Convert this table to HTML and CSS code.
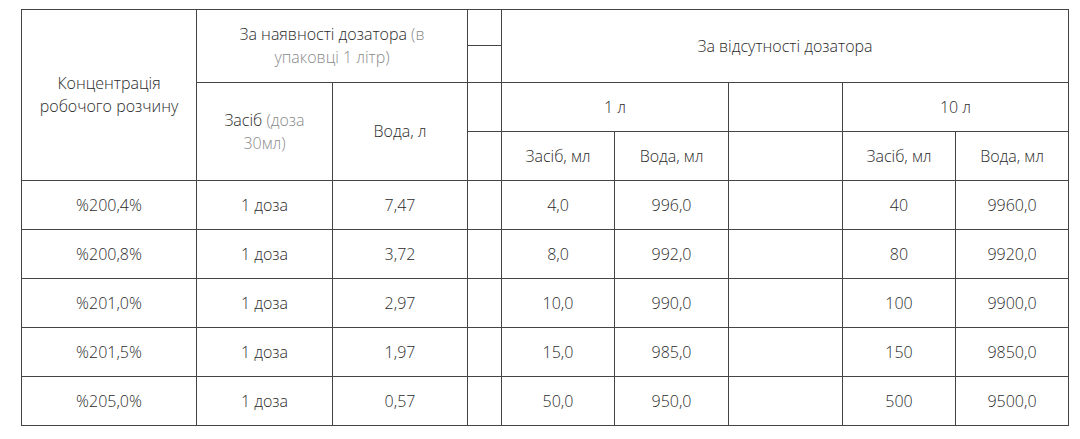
FILE: index.html
```html
<!DOCTYPE html>
<html lang="uk">
<head>
<meta charset="utf-8">
<title>Таблиця розведення</title>
<link rel="stylesheet" href="styles.css">
</head>
<body>
<table class="dose-table">
  <colgroup>
    <col class="c-conc">
    <col class="c-dose">
    <col class="c-water">
    <col class="c-gap">
    <col class="c-sub">
    <col class="c-sub2">
    <col class="c-sub2">
    <col class="c-sub">
    <col class="c-sub">
  </colgroup>
  <thead>
    <tr class="h-top-a">
      <th rowspan="4">Концентрація<br>робочого розчину</th>
      <th colspan="2" rowspan="2">За наявності дозатора <span class="muted">(в<br>упаковці 1 літр)</span></th>
      <th></th>
      <th colspan="5" rowspan="2">За відсутності дозатора</th>
    </tr>
    <tr class="h-top-b">
      <th></th>
    </tr>
    <tr class="h-mid">
      <th rowspan="2">Засіб <span class="muted">(доза<br>30мл)</span></th>
      <th rowspan="2">Вода, л</th>
      <th></th>
      <th colspan="2">1 л</th>
      <th></th>
      <th colspan="2">10 л</th>
    </tr>
    <tr class="h-low">
      <th></th>
      <th>Засіб, мл</th>
      <th>Вода, мл</th>
      <th></th>
      <th>Засіб, мл</th>
      <th>Вода, мл</th>
    </tr>
  </thead>
  <tbody>
    <tr><td>%200,4%</td><td>1 доза</td><td>7,47</td><td></td><td>4,0</td><td>996,0</td><td></td><td>40</td><td>9960,0</td></tr>
    <tr><td>%200,8%</td><td>1 доза</td><td>3,72</td><td></td><td>8,0</td><td>992,0</td><td></td><td>80</td><td>9920,0</td></tr>
    <tr><td>%201,0%</td><td>1 доза</td><td>2,97</td><td></td><td>10,0</td><td>990,0</td><td></td><td>100</td><td>9900,0</td></tr>
    <tr><td>%201,5%</td><td>1 доза</td><td>1,97</td><td></td><td>15,0</td><td>985,0</td><td></td><td>150</td><td>9850,0</td></tr>
    <tr><td>%205,0%</td><td>1 доза</td><td>0,57</td><td></td><td>50,0</td><td>950,0</td><td></td><td>500</td><td>9500,0</td></tr>
  </tbody>
</table>
</body>
</html>
```

FILE: styles.css
```css
html, body {
  margin: 0;
  padding: 0;
  background: #ffffff;
}

body {
  padding: 9px 0 0 21px;
  font-family: "Open Sans", "DejaVu Sans", sans-serif;
  color: #2b2b2b;
}

.dose-table {
  border-collapse: collapse;
  table-layout: fixed;
  width: 1048px;
}

.c-conc { width: 175px; }
.c-dose { width: 136px; }
.c-water { width: 135px; }
.c-gap { width: 34px; }
.c-sub { width: 113px; }
.c-sub2 { width: 114px; }

.dose-table th,
.dose-table td {
  border: 1px solid #444444;
  padding: 0 4px;
  text-align: center;
  vertical-align: middle;
  font-weight: 300;
  font-size: 16px;
  line-height: 23px;
  color: #2b2b2b;
}

.dose-table .muted {
  color: #8a8a8a;
}

.h-top-a { height: 36px; }
.h-top-b { height: 37px; }
.h-mid { height: 49px; }
.h-low { height: 49px; }
.dose-table tbody tr { height: 49px; }
```
